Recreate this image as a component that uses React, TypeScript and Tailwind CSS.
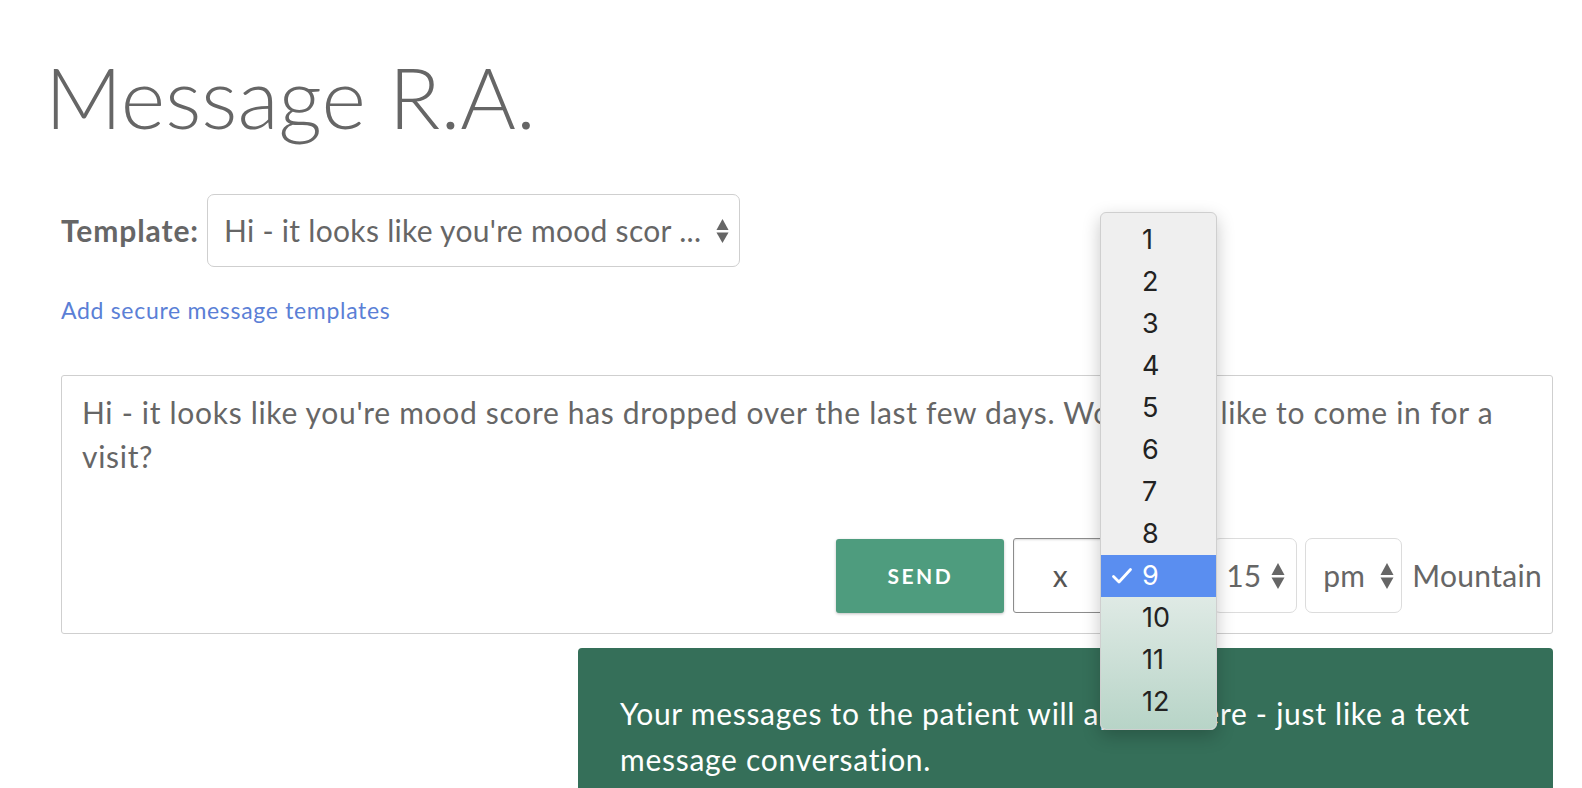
import React from "react";

const Arrows = ({ w = 14, h = 28 }: { w?: number; h?: number }) => (
  <svg width={w} height={h} viewBox="0 0 14 28" className="shrink-0">
    <path d="M7 1 L13.5 13 L0.5 13 Z" fill="#666" />
    <path d="M7 27 L13.5 15.5 L0.5 15.5 Z" fill="#666" />
  </svg>
);

const Dropdown = () => {
  const items = ["1", "2", "3", "4", "5", "6", "7", "8", "9", "10", "11", "12"];
  return (
    <div className="absolute left-[1100px] top-[212px] flex h-[518px] w-[117px] flex-col overflow-hidden rounded-[6px] border border-[#cfcfcf] bg-[#efefef] font-['Inter',sans-serif] text-[27px] text-[#222] shadow-[0_6px_18px_rgba(0,0,0,0.22)]">
      <div className="pt-[6px]">
        {items.slice(0, 8).map((n) => (
          <div key={n} className="flex h-[42px] items-center pl-[41px]">
            {n}
          </div>
        ))}
        <div className="relative flex h-[42px] items-center bg-[#5a8ef0] pl-[41px] text-white">
          <svg width="22" height="18" viewBox="0 0 22 18" className="absolute left-[10px] top-[12px]">
            <path d="M2.5 9.5 L8 15 L19.5 2.5" fill="none" stroke="white" strokeWidth="2.8" strokeLinecap="round" strokeLinejoin="round" />
          </svg>
          9
        </div>
      </div>
      <div className="flex-1 bg-gradient-to-b from-[#dfeae5] to-[#b7d4c7] pb-[7px]">
        {items.slice(9).map((n) => (
          <div key={n} className="flex h-[42px] items-center pl-[41px]">
            {n}
          </div>
        ))}
      </div>
    </div>
  );
};

export default function App() {
  return (
    <div className="relative h-[788px] w-[1582px] overflow-hidden bg-white font-['Lato',sans-serif] text-[#666]">
      <h1 className="pl-[45px] pt-[46px] text-[85px] font-light leading-[100px] text-[#666]">
        Message R.A.
      </h1>
      <div className="pl-[61px] pr-[29px]">
        <div className="mt-[48px] flex items-center">
          <span className="text-[30px] font-bold tracking-[0.03em] text-[#666]">Template:</span>
          <div className="ml-[8px] flex h-[73px] w-[533px] items-center justify-between rounded-[7px] border border-[#cfcfcf] pl-[16px] pr-[10px]">
            <span className="text-[30px] tracking-[0.01em] text-[#666]">Hi - it looks like you're mood scor ...</span>
            <Arrows w={13} h={26} />
          </div>
        </div>
        <a className="mt-[28px] block text-[23px] leading-[30px] tracking-[0.03em] text-[#5b7fd6]">
          Add secure message templates
        </a>
        <div className="mt-[50px] flex h-[259px] flex-col rounded-[3px] border border-[#cfcfcf]">
          <p className="px-[20px] pt-[14px] text-[30px] leading-[44px] tracking-[0.023em] text-[#666]">
            Hi - it looks like you're mood score has dropped over the last few days. Would you like to come in for a
            <br />
            visit?
          </p>
          <div className="mt-auto flex items-center justify-end pb-[20px] pr-[10px]">
            <button className="flex h-[74px] w-[168px] items-center justify-center rounded-[3px] bg-[#4e9c7e] text-[21px] font-bold tracking-[0.12em] text-white shadow-[0_1px_3px_rgba(0,0,0,0.25)]">
              SEND
            </button>
            <div className="ml-[9px] flex h-[75px] w-[94px] items-center justify-center rounded-[3px] border border-[#8c8c8c] text-[30px] text-[#555] shadow-[inset_0_1px_2px_rgba(0,0,0,0.15)]">
              x
            </div>
            <div className="ml-[8px] flex h-[75px] w-[90px] items-center justify-between rounded-[7px] border border-[#cfcfcf] px-[10px] text-[30px]">
              9
              <Arrows />
            </div>
            <div className="ml-[8px] flex h-[75px] w-[84px] items-center justify-between rounded-[7px] border border-[#dcdcdc] pl-[12px] pr-[11px] text-[30px] text-[#666]">
              15
              <Arrows />
            </div>
            <div className="ml-[8px] flex h-[75px] w-[97px] items-center justify-between rounded-[7px] border border-[#dcdcdc] pl-[17px] pr-[7px] text-[30px] text-[#666]">
              pm
              <Arrows />
            </div>
            <span className="ml-[10px] text-[30px] tracking-[0.01em] text-[#666]">Mountain</span>
          </div>
        </div>
        <div className="ml-[517px] mt-[14px] h-[140px] rounded-t-[4px] bg-[#356f59] px-[42px] pt-[42px] text-[30px] leading-[46px] tracking-[0.024em] text-white">
          Your messages to the patient will appear here - just like a text
          <br />
          message conversation.
        </div>
      </div>
      <Dropdown />
    </div>
  );
}
